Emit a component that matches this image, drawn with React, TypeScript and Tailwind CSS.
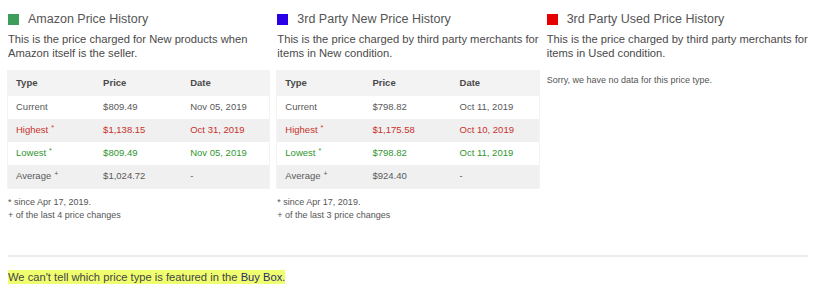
import React from 'react';

type Row = { type: string; mark: string; price: string; date: string; tone: 'plain' | 'high' | 'low' };

interface Section {
  title: string;
  swatch: string;
  desc: string;
  rows?: Row[];
  changes?: number;
}

const sections: Section[] = [
  {
    title: 'Amazon Price History',
    swatch: 'bg-[#3f9d5c]',
    desc: 'This is the price charged for New products when Amazon itself is the seller.',
    rows: [
      { type: 'Current', mark: '', price: '$809.49', date: 'Nov 05, 2019', tone: 'plain' },
      { type: 'Highest', mark: '*', price: '$1,138.15', date: 'Oct 31, 2019', tone: 'high' },
      { type: 'Lowest', mark: '*', price: '$809.49', date: 'Nov 05, 2019', tone: 'low' },
      { type: 'Average', mark: '+', price: '$1,024.72', date: '-', tone: 'plain' },
    ],
    changes: 4,
  },
  {
    title: '3rd Party New Price History',
    swatch: 'bg-[#2a00e6]',
    desc: 'This is the price charged by third party merchants for items in New condition.',
    rows: [
      { type: 'Current', mark: '', price: '$798.82', date: 'Oct 11, 2019', tone: 'plain' },
      { type: 'Highest', mark: '*', price: '$1,175.58', date: 'Oct 10, 2019', tone: 'high' },
      { type: 'Lowest', mark: '*', price: '$798.82', date: 'Oct 11, 2019', tone: 'low' },
      { type: 'Average', mark: '+', price: '$924.40', date: '-', tone: 'plain' },
    ],
    changes: 3,
  },
  {
    title: '3rd Party Used Price History',
    swatch: 'bg-[#e60000]',
    desc: 'This is the price charged by third party merchants for items in Used condition.',
  },
];

const toneClass = (tone: Row['tone']) =>
  tone === 'high' ? 'text-[#c9302c]' : tone === 'low' ? 'text-[#2f962f]' : 'text-[#595959]';

const App: React.FC = () => {
  return (
    <div className="w-[816px] h-[291px] bg-white px-2 pt-[11px] font-['Liberation_Sans',Arial,sans-serif] text-[#555]">
      <div className="grid grid-cols-3 gap-x-2">
        {sections.map((s) => (
          <div key={s.title}>
            {/* Header */}
            <div className="flex items-center gap-[9px] h-[16px]">
              <span className={`w-[11px] h-[11px] ${s.swatch}`} />
              <span className="text-[12.5px] text-[#555]">{s.title}</span>
            </div>
            <p className="mt-[6px] text-[11.2px] leading-[13.5px] text-[#4a4a4a]">{s.desc}</p>

            {s.rows ? (
              <>
                <table className="mt-[11px] w-full table-fixed border-collapse text-[9.5px] shadow-[0_0_0_1px_#f3f3f3]">
                  <thead>
                    <tr className="bg-[#f3f3f3] h-[25px]">
                      <th className="text-left font-bold text-[#4a4a4a] px-2">Type</th>
                      <th className="text-left font-bold text-[#4a4a4a] px-2">Price</th>
                      <th className="text-left font-bold text-[#4a4a4a] px-2">Date</th>
                    </tr>
                  </thead>
                  <tbody>
                    {s.rows.map((r, i) => (
                      <tr key={r.type} className={`h-[23px] ${i % 2 === 1 ? 'bg-[#f0f0f0]' : 'bg-white'} ${toneClass(r.tone)}`}>
                        <td className="px-2">
                          {r.type}
                          {r.mark && <span className="ml-[3px] text-[7px] relative top-[-3px]">{r.mark}</span>}
                        </td>
                        <td className="px-2">{r.price}</td>
                        <td className="px-2">{r.date}</td>
                      </tr>
                    ))}
                  </tbody>
                </table>
                <div className="mt-[8px] text-[9px] leading-[13px] text-[#555]">
                  <p>* since Apr 17, 2019.</p>
                  <p>+ of the last {s.changes} price changes</p>
                </div>
              </>
            ) : (
              <p className="mt-[14px] text-[9px] text-[#555]">Sorry, we have no data for this price type.</p>
            )}
          </div>
        ))}
      </div>

      <hr className="mt-[33px] border-t-2 border-[#ececec]" />

      <p className="mt-[13px] text-[11.2px] leading-[15px]">
        <span className="bg-[#efff70] text-[#444] py-[1px]">
          We can't tell which price type is featured in the <span className="text-[#2c2c6a]">Buy Box</span>.
        </span>
      </p>
    </div>
  );
};

export default App;
